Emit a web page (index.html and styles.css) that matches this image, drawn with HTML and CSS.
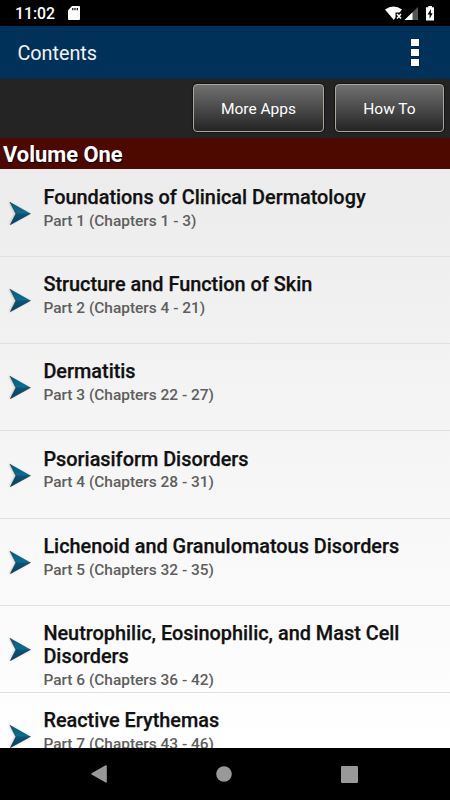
FILE: index.html
```html
<!DOCTYPE html>
<html lang="en">
<head>
    <meta charset="UTF-8">
    <meta name="viewport" content="width=device-width, initial-scale=1.0">
    <title>Contents</title>
    <link rel="stylesheet" href="styles.css">
</head>
<body>
    <svg class="defs" width="0" height="0">
        <defs>
            <linearGradient id="arrowFill" x1="0" y1="0" x2="0" y2="1">
                <stop offset="0" stop-color="#0b5878"/>
                <stop offset="0.5" stop-color="#086f90"/>
                <stop offset="0.52" stop-color="#075676"/>
                <stop offset="1" stop-color="#0a4060"/>
            </linearGradient>
            <symbol id="arrow" viewBox="0 0 22 26">
                <path d="M1 2 L21.5 13.5 L1.5 24.5 L7 13.8 Z" fill="url(#arrowFill)"/>
                <path d="M21.5 13.5 L1.5 24.5 L7 13.8 L1 2" fill="none" stroke="#10304a" stroke-width="0.7"/>
            </symbol>
        </defs>
    </svg>

    <div class="status-bar">
        <span class="clock">11:02</span>
        <svg class="sd-icon" width="12" height="14" viewBox="0 0 12 14">
            <path d="M4 0 H11 Q12 0 12 1 V13 Q12 14 11 14 H1 Q0 14 0 13 V4.2 Z" fill="#fff"/>
            <path d="M4.8 2 V4.3 M7 2 V4.3 M9.3 2 V4.3" stroke="#000" stroke-width="1.2"/>
        </svg>
        <svg class="signal-icons" width="50" height="16" viewBox="0 0 50 16">
            <path d="M0 3.5 Q8.5 -2.5 17 3.5 L14.5 6.6 H10.5 V11.5 L8.8 14 Z" fill="#fff"/>
            <path d="M12 8 L16 12.4 M16 8 L12 12.4" stroke="#fff" stroke-width="1.5"/>
            <path d="M19.5 14 L33 1 V14 Z" fill="#555"/>
            <path d="M19.5 14 L27.5 6.2 V14 Z" fill="#fff"/>
            <path d="M43.3 0 H47 V1.3 H49 V14.5 H41 V1.3 H43.3 Z" fill="#fff"/>
            <path d="M46 3 L42.6 8.6 H44.6 V12.8 L47.6 7.2 H45.8 Z" fill="#000"/>
        </svg>
    </div>

    <header class="title-bar">
        <h1>Contents</h1>
        <div class="menu-icon"><i></i><i></i><i></i></div>
    </header>

    <div class="toolbar">
        <button class="btn btn-more">More Apps</button>
        <button class="btn btn-how">How To</button>
    </div>

    <h2 class="section-title">Volume One</h2>

    <div class="list">
        <div class="row">
            <svg class="arrow"><use href="#arrow"/></svg>
            <div class="text">
                <h3>Foundations of Clinical Dermatology</h3>
                <p>Part 1 (Chapters 1 - 3)</p>
            </div>
        </div>
        <div class="row">
            <svg class="arrow"><use href="#arrow"/></svg>
            <div class="text">
                <h3>Structure and Function of Skin</h3>
                <p>Part 2 (Chapters 4 - 21)</p>
            </div>
        </div>
        <div class="row">
            <svg class="arrow"><use href="#arrow"/></svg>
            <div class="text">
                <h3>Dermatitis</h3>
                <p>Part 3 (Chapters 22 - 27)</p>
            </div>
        </div>
        <div class="row">
            <svg class="arrow"><use href="#arrow"/></svg>
            <div class="text">
                <h3>Psoriasiform Disorders</h3>
                <p>Part 4 (Chapters 28 - 31)</p>
            </div>
        </div>
        <div class="row">
            <svg class="arrow"><use href="#arrow"/></svg>
            <div class="text">
                <h3>Lichenoid and Granulomatous Disorders</h3>
                <p>Part 5 (Chapters 32 - 35)</p>
            </div>
        </div>
        <div class="row">
            <svg class="arrow"><use href="#arrow"/></svg>
            <div class="text">
                <h3>Neutrophilic, Eosinophilic, and Mast Cell Disorders</h3>
                <p>Part 6 (Chapters 36 - 42)</p>
            </div>
        </div>
        <div class="row">
            <svg class="arrow"><use href="#arrow"/></svg>
            <div class="text">
                <h3>Reactive Erythemas</h3>
                <p>Part 7 (Chapters 43 - 46)</p>
            </div>
        </div>
    </div>

    <div class="nav-bar">
        <svg width="16" height="18" viewBox="0 0 16 18"><path d="M0.6 8.3 L14.6 0.2 Q15.8 0 15.8 1 V17 Q15.8 18 14.6 17.6 L0.6 9.6 Q0 9 0.6 8.3 Z" fill="#999"/></svg>
        <svg width="16" height="16" viewBox="0 0 16 16"><circle cx="8" cy="8" r="7.8" fill="#999"/></svg>
        <svg width="17" height="17" viewBox="0 0 17 17"><rect width="17" height="17" rx="1.2" fill="#999"/></svg>
    </div>
</body>
</html>
```

FILE: styles.css
```css
* {
    box-sizing: border-box;
}
body {
    font-family: Roboto, Arial, sans-serif;
    margin: 0;
    width: 450px;
    height: 800px;
    overflow: hidden;
    display: flex;
    flex-direction: column;
    background-color: #000;
}
h1, h2, h3, p {
    margin: 0;
}
.defs {
    flex: none;
}
/* Android status bar */
.status-bar {
    height: 26px;
    flex: none;
    display: flex;
    padding: 0 15px;
    color: #fff;
}
.clock {
    font-size: 15.8px;
    font-weight: 500;
    line-height: 28px;
    width: 53px;
}
.sd-icon {
    margin-top: 6px;
}
.signal-icons {
    margin: 6px 0 0 auto;
}
.title-bar {
    height: 53px;
    flex: none;
    display: flex;
    align-items: center;
    justify-content: space-between;
    padding: 0 31px 0 17.4px;
    background-color: #003259;
    color: #f3f3f3;
}
.title-bar h1 {
    font-size: 19.8px;
    font-weight: 400;
    line-height: 24px;
    padding-top: 3px;
}
.menu-icon {
    display: flex;
    flex-direction: column;
    gap: 3px;
}
.menu-icon i {
    width: 8px;
    height: 7px;
    background-color: #fff;
    box-shadow: 0 0 1px #000048;
}
.toolbar {
    height: 59px;
    flex: none;
    display: flex;
    justify-content: flex-end;
    gap: 11px;
    padding: 5px 6px 0 0;
    background-color: #242424;
}
.btn {
    height: 48px;
    padding: 1px 0 0;
    font-family: inherit;
    font-size: 15.5px;
    color: #fff;
    border: 1px solid #aaa69b;
    border-radius: 4px;
    background: linear-gradient(#717171, #242424);
    box-shadow: 0 0 1px 1px #151515;
}
.btn-more {
    width: 131px;
}
.btn-how {
    width: 109px;
}
.section-title {
    height: 31px;
    flex: none;
    padding-left: 3px;
    background-color: #4d0900;
    color: #fff;
    font-size: 21.9px;
    font-weight: 700;
    line-height: 33px;
    text-shadow: 1px 1px 1px #000;
}
.list {
    flex: 1;
    min-height: 0;
    overflow: hidden;
    padding-top: 0.7px;
    background: linear-gradient(#ececec, #fff);
}
.row {
    height: 87.25px;
    display: flex;
    padding: 16.3px 10px 0 9px;
    border-bottom: 1px solid #e0e0e0;
}
.arrow {
    width: 22px;
    height: 26px;
    flex: none;
    margin: 13.8px 12.4px 0 0;
    filter: drop-shadow(-1px 0 1px rgba(0, 0, 0, 0.2));
}
.text h3 {
    font-size: 19.88px;
    font-weight: 500;
    line-height: 23px;
    color: #111;
    -webkit-text-stroke: 0.25px #111;
}
.text p {
    font-size: 15.45px;
    font-weight: 500;
    line-height: 20px;
    margin-top: 1.7px;
    color: #5e5e5e;
}
.nav-bar {
    height: 52px;
    flex: none;
    display: flex;
    align-items: center;
    justify-content: space-between;
    padding: 0 92px 0 91px;
    background-color: #000;
}
```
